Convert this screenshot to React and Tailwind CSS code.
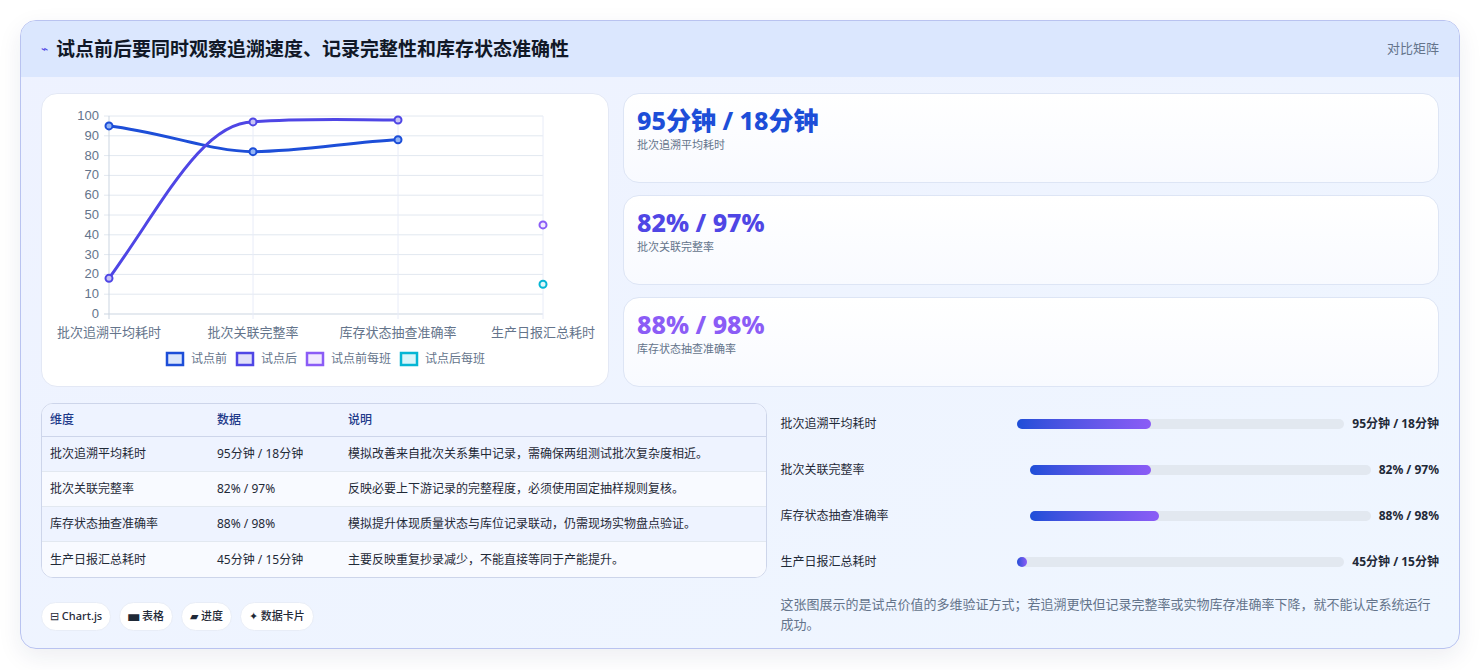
import React from "react";

const font = { fontFamily: '"Noto Sans", "Noto Sans CJK SC", sans-serif' };

const rows = [
    ["批次追溯平均耗时", "95分钟 / 18分钟", "模拟改善来自批次关系集中记录，需确保两组测试批次复杂度相近。"],
    ["批次关联完整率", "82% / 97%", "反映必要上下游记录的完整程度，必须使用固定抽样规则复核。"],
    ["库存状态抽查准确率", "88% / 98%", "模拟提升体现质量状态与库位记录联动，仍需现场实物盘点验证。"],
    ["生产日报汇总耗时", "45分钟 / 15分钟", "主要反映重复抄录减少，不能直接等同于产能提升。"],
];

const bars = [
    { label: "批次追溯平均耗时", value: "95分钟 / 18分钟", w: "w-[327px]", fill: "41%" },
    { label: "批次关联完整率", value: "82% / 97%", w: "w-[341px]", fill: "35.5%" },
    { label: "库存状态抽查准确率", value: "88% / 98%", w: "w-[341px]", fill: "38%" },
    { label: "生产日报汇总耗时", value: "45分钟 / 15分钟", w: "w-[327px]", fill: "3%" },
];

const stats = [
    ["95分钟 / 18分钟", "批次追溯平均耗时", "text-[#1d4ed8]"],
    ["82% / 97%", "批次关联完整率", "text-[#4f46e5]"],
    ["88% / 98%", "库存状态抽查准确率", "text-[#8b5cf6]"],
];

const Chart = () => {
    const xs = [67, 211, 356, 501];
    const y = (v) => 220 - 1.98 * v;
    const ticks = [0, 10, 20, 30, 40, 50, 60, 70, 80, 90, 100];
    const cats = ["批次追溯平均耗时", "批次关联完整率", "库存状态抽查准确率", "生产日报汇总耗时"];
    return (
        <svg width="568" height="294" className="block" style={{ fontFamily: '"Liberation Sans", "Noto Sans CJK SC", sans-serif' }}>
            {ticks.map((t) => (
                <g key={t}>
                    <line x1="62" x2="501" y1={y(t)} y2={y(t)} stroke={t === 0 ? "#cbd5e1" : "#e2e8f0"} />
                    <text x="57" y={y(t) + 4} textAnchor="end" fontSize="13" fill="#64748b">{t}</text>
                </g>
            ))}
            {xs.map((x) => (
                <line key={x} x1={x} x2={x} y1="22" y2="225" stroke={x === 67 ? "#cbd5e1" : "#e8ecf8"} />
            ))}
            {cats.map((c, i) => (
                <text key={c} x={xs[i]} y="243" textAnchor="middle" fontSize="13" fill="#64748b">{c}</text>
            ))}
            <path d={`M67 ${y(95)} C120 ${y(92)} 170 ${y(82)} 211 ${y(82)} C260 ${y(82)} 310 ${y(87)} 356 ${y(88)}`} fill="none" stroke="#1d4ed8" strokeWidth="3" />
            <path d={`M67 ${y(18)} C120 ${y(55)} 160 ${y(97)} 211 ${y(97)} C260 ${y(99)} 310 ${y(98)} 356 ${y(98)}`} fill="none" stroke="#4f46e5" strokeWidth="3" />
            {[[67, 95], [211, 82], [356, 88]].map(([x, v]) => (
                <circle key={x} cx={x} cy={y(v)} r="3.5" fill="#93b4f5" stroke="#1d4ed8" strokeWidth="2" />
            ))}
            {[[67, 18], [211, 97], [356, 98]].map(([x, v]) => (
                <circle key={x} cx={x} cy={y(v)} r="3.5" fill="#c7c3f5" stroke="#4f46e5" strokeWidth="2" />
            ))}
            <circle cx="501" cy={y(45)} r="3.5" fill="#f1eafe" stroke="#8b5cf6" strokeWidth="2" />
            <circle cx="501" cy={y(15)} r="3.5" fill="#e0f7fb" stroke="#06b6d4" strokeWidth="2" />
            {[
                [125, "试点前", "#1d4ed8", "#dbe6fb"],
                [195, "试点后", "#4f46e5", "#e0dff9"],
                [265, "试点前每班", "#8b5cf6", "#f1eafe"],
                [359, "试点后每班", "#06b6d4", "#d9f5fa"],
            ].map(([x, t, s, f]) => (
                <g key={t}>
                    <rect x={x} y="259" width="16" height="12" fill={f} stroke={s} strokeWidth="2.5" />
                    <text x={x + 24} y="269" fontSize="12" fill="#64748b">{t}</text>
                </g>
            ))}
        </svg>
    );
};

export default function App() {
    return (
        <div className="min-h-[670px] bg-white pt-5 px-5" style={font}>
            <div className="w-[1440px] h-[629px] rounded-2xl border border-[#b9c3f0] bg-gradient-to-br from-[#eef2ff] to-[#eff6ff] overflow-hidden shadow-[0_8px_24px_rgba(30,41,90,0.08)]">
                <div className="h-14 bg-[#dbe7fe] flex items-center justify-between px-5">
                    <div className="flex items-center gap-2">
                        <span className="text-[#4f46e5] text-xs">⌁</span>
                        <h1 className="text-[19px] font-bold text-[#111827]">试点前后要同时观察追溯速度、记录完整性和库存状态准确性</h1>
                    </div>
                    <span className="text-[13px] text-[#64748b]">对比矩阵</span>
                </div>
                <div className="px-5 pt-4">
                    <div className="flex gap-[14px]">
                        <div className="w-[568px] h-[294px] rounded-2xl bg-white border border-[#e3e8f5]">
                            <Chart />
                        </div>
                        <div className="flex-1 flex flex-col gap-3">
                            {stats.map(([v, l, c]) => (
                                <div key={l} className="h-[90px] rounded-2xl border border-[#dde5f5] bg-gradient-to-b from-white to-[#f8faff] px-[13px] pt-[10px]">
                                    <div className={`text-[25px] font-extrabold leading-[32px] ${c}`}>{v}</div>
                                    <div className="text-[11px] text-[#64748b] mt-[1px]">{l}</div>
                                </div>
                            ))}
                        </div>
                    </div>
                    <div className="flex gap-[13px] mt-4">
                        <div className="w-[728px]">
                            <div className="rounded-xl border border-[#cdd5ea] overflow-hidden bg-white text-[12px] text-[#1f2937]">
                                <div className="flex h-[33px] items-center bg-[#eef3ff] border-b border-[#cdd5ea] text-[#1e3a8a] font-medium">
                                    <div className="w-[175px] pl-[8px]">维度</div>
                                    <div className="w-[131px]">数据</div>
                                    <div>说明</div>
                                </div>
                                {rows.map((r, i) => (
                                    <div key={r[0]} className={`flex h-[35px] items-center ${i < 3 ? "border-b border-[#e2e8f0]" : ""} ${i % 2 === 0 ? "bg-[#eef3ff]" : "bg-[#f8faff]"}`}>
                                        <div className="w-[175px] pl-[8px]">{r[0]}</div>
                                        <div className="w-[131px]">{r[1]}</div>
                                        <div>{r[2]}</div>
                                    </div>
                                ))}
                            </div>
                            <div className="flex gap-[8px] mt-6 text-[11px] text-[#1f2937] font-medium">
                                {["⊟ Chart.js", "▅ 表格", "▰ 进度", "✦ 数据卡片"].map((t) => (
                                    <span key={t} className="h-[29px] px-[8px] rounded-full bg-white border border-[#e8edf7] flex items-center">{t}</span>
                                ))}
                            </div>
                        </div>
                        <div className="w-[660px] text-[12px] text-[#1f2937]">
                            <div className="flex flex-col gap-[29px] pt-[12px]">
                                {bars.map((b) => (
                                    <div key={b.label} className="flex items-center gap-2 h-[17px]">
                                        <div className="flex-1">{b.label}</div>
                                        <div className={`${b.w} h-[10px] rounded-full bg-[#e2e8f0]`}>
                                            <div className="h-full rounded-full bg-gradient-to-r from-[#1d4ed8] to-[#8b5cf6]" style={{ width: b.fill, minWidth: 10 }} />
                                        </div>
                                        <div className="font-bold">{b.value}</div>
                                    </div>
                                ))}
                            </div>
                            <p className="mt-[24px] text-[13px] leading-[20px] text-[#64748b]">
                                这张图展示的是试点价值的多维验证方式；若追溯更快但记录完整率或实物库存准确率下降，就不能认定系统运行成功。
                            </p>
                        </div>
                    </div>
                </div>
            </div>
        </div>
    );
}
